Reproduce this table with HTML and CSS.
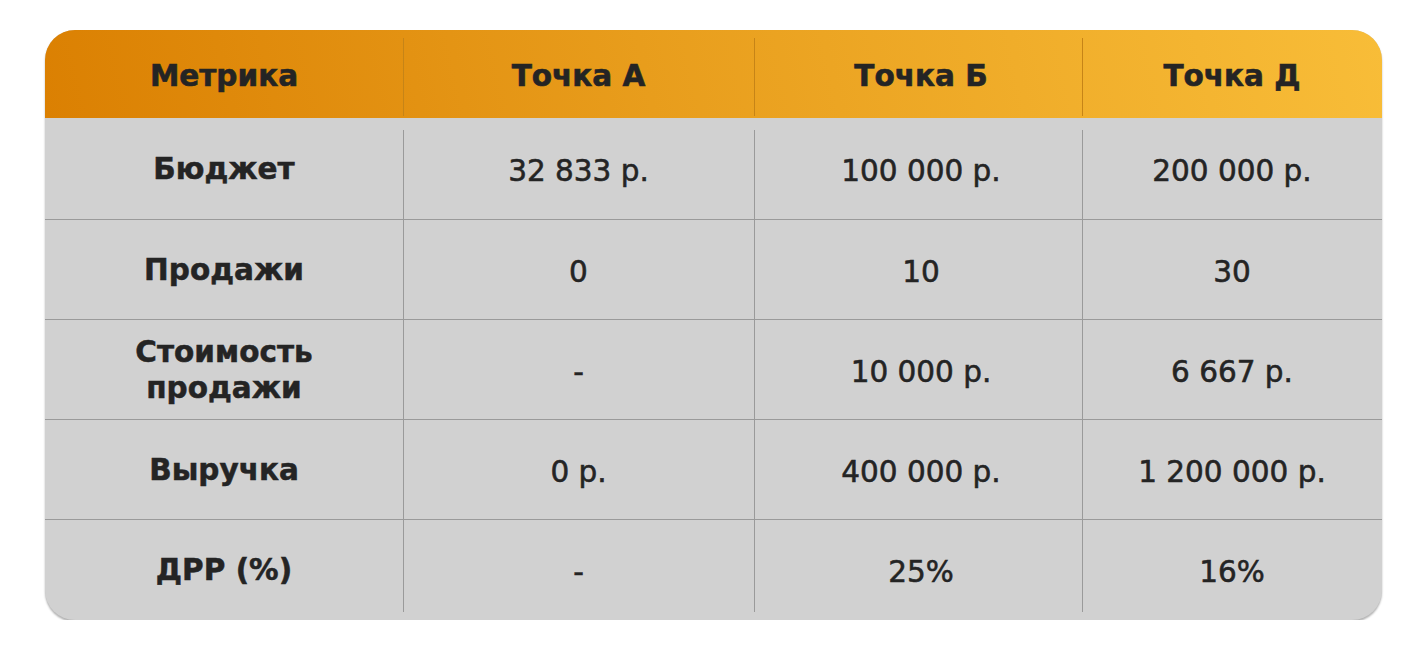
FILE: index.html
```html
<!DOCTYPE html>
<html lang="ru">
<head>
<meta charset="utf-8">
<link rel="stylesheet" href="styles.css">
</head>
<body>
<div class="table">
  <div class="head">
    <div class="hcell">Метрика</div>
    <div class="hcell">Точка А</div>
    <div class="hcell">Точка Б</div>
    <div class="hcell">Точка Д</div>
  </div>
  <div class="body">
    <div class="row first">
      <div class="cell label">Бюджет</div>
      <div class="cell">32 833 р.</div>
      <div class="cell">100 000 р.</div>
      <div class="cell">200 000 р.</div>
    </div>
    <div class="row">
      <div class="cell label">Продажи</div>
      <div class="cell">0</div>
      <div class="cell">10</div>
      <div class="cell">30</div>
    </div>
    <div class="row">
      <div class="cell label">Стоимость<br>продажи</div>
      <div class="cell">-</div>
      <div class="cell">10 000 р.</div>
      <div class="cell">6 667 р.</div>
    </div>
    <div class="row">
      <div class="cell label">Выручка</div>
      <div class="cell">0 р.</div>
      <div class="cell">400 000 р.</div>
      <div class="cell">1 200 000 р.</div>
    </div>
    <div class="row last">
      <div class="cell label">ДРР (%)</div>
      <div class="cell">-</div>
      <div class="cell">25%</div>
      <div class="cell">16%</div>
    </div>
  </div>
</div>
</body>
</html>
```
FILE: styles.css
```css
html, body {
  margin: 0;
  padding: 0;
  background: #ffffff;
}
body {
  padding: 30px 44px 0 45px;
  font-family: "DejaVu Sans", "Noto Sans", sans-serif;
  color: #242424;
}
.table {
  width: 1337px;
  border-radius: 30px;
  overflow: hidden;
  background: #d1d1d1;
  box-shadow: 0 2px 2px rgba(0, 0, 0, 0.3);
}
.head,
.row {
  display: grid;
  grid-template-columns: 358px 351px 328px 300px;
}
.head {
  height: 88px;
  background: linear-gradient(78deg, #db8002 0%, #e89d1c 45%, #f8bd38 100%);
}
.hcell {
  display: flex;
  align-items: center;
  justify-content: center;
  font-weight: bold;
  font-size: 29.5px;
  -webkit-text-stroke: 0.6px #242424;
  padding-top: 4px;
}
.hcell + .hcell {
  background: linear-gradient(#c68417, #c68417) no-repeat left 8px / 1px 78px;
}
.hcell:nth-child(3) {
  padding-left: 6px;
}
.row {
  box-sizing: border-box;
  height: 100px;
}
.row + .row {
  border-top: 1px solid #9a9a9a;
}
.row.first,
.row.last {
  height: 101px;
}
.cell {
  display: flex;
  align-items: center;
  justify-content: center;
  text-align: center;
  font-size: 29.5px;
  line-height: 36px;
  -webkit-text-stroke: 0.55px #242424;
  padding-top: 4px;
}
.cell:nth-child(3) {
  padding-left: 6px;
}
.cell + .cell {
  background: linear-gradient(#9a9a9a, #9a9a9a) no-repeat left top / 1px 100%;
}
.first .cell + .cell {
  background-position: left 12px;
  background-size: 1px calc(100% - 12px);
}
.last .cell + .cell {
  background-size: 1px calc(100% - 8px);
}
.label {
  font-weight: bold;
  -webkit-text-stroke: 0.5px #242424;
  padding-top: 0;
}
```
